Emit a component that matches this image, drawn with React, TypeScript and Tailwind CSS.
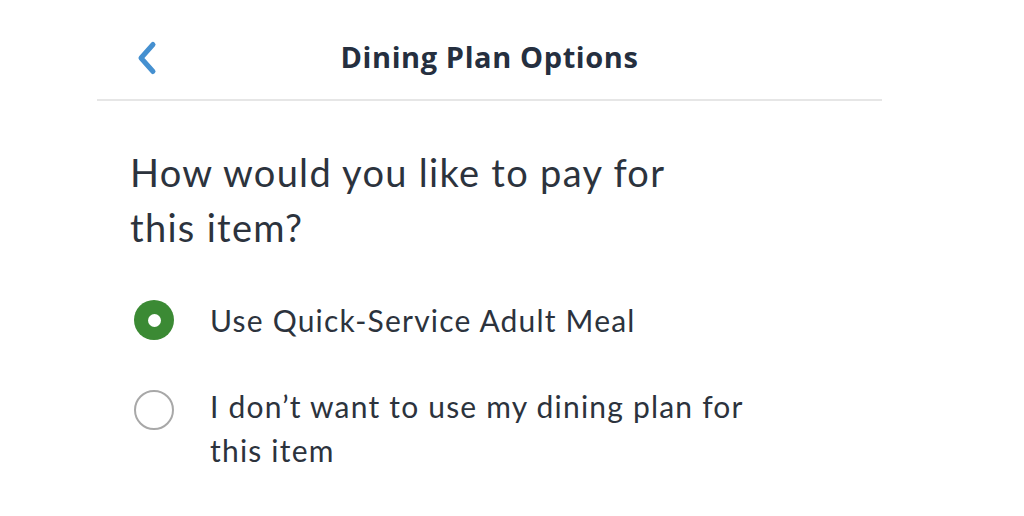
import React from "react";

export default function App() {
  return (
    <div className="w-[1024px] h-[516px] bg-white overflow-hidden" style={{ fontFamily: "Lato, 'Noto Sans', sans-serif" }}>
      <div className="ml-[97px] w-[785px]">
        <div className="relative h-[101px] flex items-center justify-center border-b-2 border-[#e6e6e6]">
          <svg className="absolute left-[38px] top-[40px]" width="24" height="36" viewBox="0 0 24 36" fill="none">
            <path d="M18 4.5 L6 18 L18 31.5" stroke="#4590d0" strokeWidth="5" strokeLinecap="round" strokeLinejoin="round" />
          </svg>
          <div className="text-[29px] tracking-[0.6px] font-bold text-[#252f3f] mt-[15px] font-['Open_Sans',sans-serif]">Dining Plan Options</div>
        </div>
        <div className="pl-[33px] pt-[44px] text-[38px] leading-[55px] tracking-[1.3px] text-[#2c333d]">
          How would you like to pay for<br />this item?
        </div>
        <div className="pl-[37px] mt-[45px] flex items-center gap-[36px]">
          <div className="w-[40px] h-[40px] rounded-full bg-[#3b8a34] flex items-center justify-center">
            <div className="w-[13px] h-[13px] rounded-full bg-white" />
          </div>
          <div className="text-[30px] tracking-[1.2px] text-[#2c333d] leading-[40px]">Use Quick-Service Adult Meal</div>
        </div>
        <div className="pl-[37px] mt-[46px] flex items-start gap-[36px]">
          <div className="w-[40px] h-[40px] rounded-full border-2 border-[#a8a8a8] mt-[4px]" />
          <div className="text-[30px] tracking-[1.2px] text-[#2c333d] leading-[44px] -mt-[2px]">
            I don’t want to use my dining plan for<br />this item
          </div>
        </div>
      </div>
    </div>
  );
}
